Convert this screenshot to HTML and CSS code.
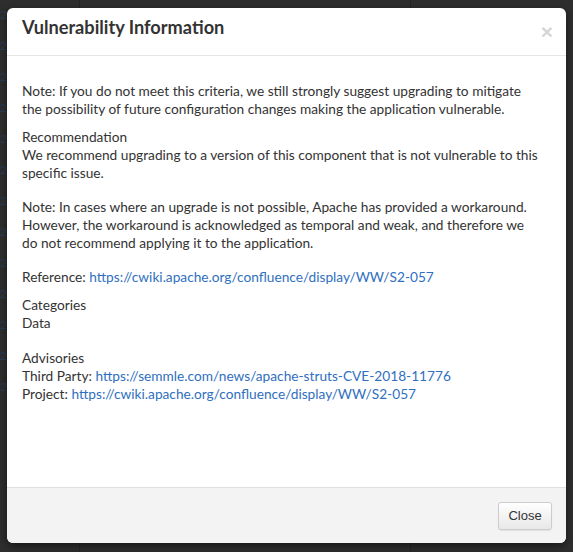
FILE: index.html
```html
<!DOCTYPE html>
<html>
<head>
<meta charset="utf-8">
<link rel="stylesheet" href="styles.css">
</head>
<body>
<div class="page">
  <div class="bg-strip">
    <div class="bg-row">2018</div>
    <div class="bg-row">2018</div>
    <div class="bg-row">2018</div>
    <div class="bg-row">2018</div>
    <div class="bg-row">2018</div>
    <div class="bg-row">2018</div>
    <div class="bg-row">2018</div>
    <div class="bg-row">2018</div>
    <div class="bg-row">2018</div>
    <div class="bg-row">2018</div>
    <div class="bg-row">2018</div>
    <div class="bg-row">2018</div>
    <div class="bg-row">2018</div>
  </div>
  <div class="modal">
    <div class="modal-header">
      <h4 class="modal-title">Vulnerability Information</h4>
      <span class="close-x">&times;</span>
    </div>
    <div class="modal-body">
      <p class="gap10">Note: If you do not meet this criteria, we still strongly suggest upgrading to mitigate<br>the possibility of future configuration changes making the application vulnerable.</p>
      <p class="gap16">Recommendation<br>We recommend upgrading to a version of this component that is not vulnerable to this<br>specific issue.</p>
      <p class="gap16">Note: In cases where an upgrade is not possible, Apache has provided a workaround.<br>However, the workaround is acknowledged as temporal and weak, and therefore we<br>do not recommend applying it to the application.</p>
      <p class="gap10">Reference: <a href="#">https://cwiki.apache.org/confluence/display/WW/S2-057</a></p>
      <p class="gap17">Categories<br>Data</p>
      <p class="gap10">Advisories<br>Third Party: <a href="#">https://semmle.com/news/apache-struts-CVE-2018-11776</a><br>Project: <a href="#">https://cwiki.apache.org/confluence/display/WW/S2-057</a></p>
    </div>
    <div class="modal-footer">
      <button class="btn">Close</button>
    </div>
  </div>
</div>
</body>
</html>
```

FILE: styles.css
```css
* { box-sizing: border-box; }
html, body { margin: 0; padding: 0; }
body {
  width: 573px;
  height: 552px;
  overflow: hidden;
  background-color: #2e2e2e;
  background-image:
    linear-gradient(90deg, transparent 79px, #262626 79px, #262626 80px, transparent 80px),
    linear-gradient(90deg, transparent 410px, #262626 410px, #262626 411px, transparent 411px);
  font-family: "Lato", "Liberation Sans", sans-serif;
}
.page {
  position: relative;
  width: 573px;
  height: 552px;
  padding: 8px 7px 9px 7px;
}
.bg-strip {
  position: absolute;
  left: 0;
  top: 0;
  width: 7px;
  overflow: hidden;
  padding-top: 6px;
  color: #2a3d57;
  font-size: 12px;
  white-space: nowrap;
}
.bg-row {
  height: 31px;
  line-height: 18px;
}
.modal {
  position: relative;
  width: 559px;
  height: 535px;
  background: #fff;
  border-radius: 6px;
  display: flex;
  flex-direction: column;
  box-shadow: 0 3px 9px rgba(0,0,0,0.5);
  overflow: hidden;
}
.modal-header {
  height: 48px;
  padding: 0 15px;
  border-bottom: 1px solid #e5e5e5;
  display: flex;
  align-items: center;
  justify-content: space-between;
}
.modal-title {
  margin: 0 0 10px;
  font-size: 18.2px;
  font-weight: 700;
  color: #333;
}
.close-x {
  font-size: 21px;
  font-weight: 700;
  color: #333;
  opacity: 0.2;
  font-family: "Liberation Sans", sans-serif;
  margin-right: -2px;
}
.modal-body {
  flex: 1;
  padding: 26px 15px 0;
  font-size: 13.7px;
  line-height: 18px;
  color: #333;
  white-space: nowrap;
}
.modal-body p { margin: 0; }
.modal-body p.gap10 { margin-bottom: 10px; }
.modal-body p.gap16 { margin-bottom: 16px; }
.modal-body p.gap17 { margin-bottom: 17px; }
.modal-body a { color: #2f6fc0; text-decoration: none; }
.modal-footer {
  height: 56px;
  background: #f3f3f3;
  border-top: 1px solid #e0e0e0;
  display: flex;
  align-items: center;
  justify-content: flex-end;
  padding: 0 14px;
}
.btn {
  font-family: "Liberation Sans", sans-serif;
  font-size: 13px;
  color: #333;
  height: 28px;
  width: 54px;
  background: linear-gradient(#fff, #e8e8e8);
  border: 1px solid #ccc;
  border-radius: 3px;
  padding: 0;
  box-shadow: 0 1px 1px rgba(0,0,0,0.08);
}
```
